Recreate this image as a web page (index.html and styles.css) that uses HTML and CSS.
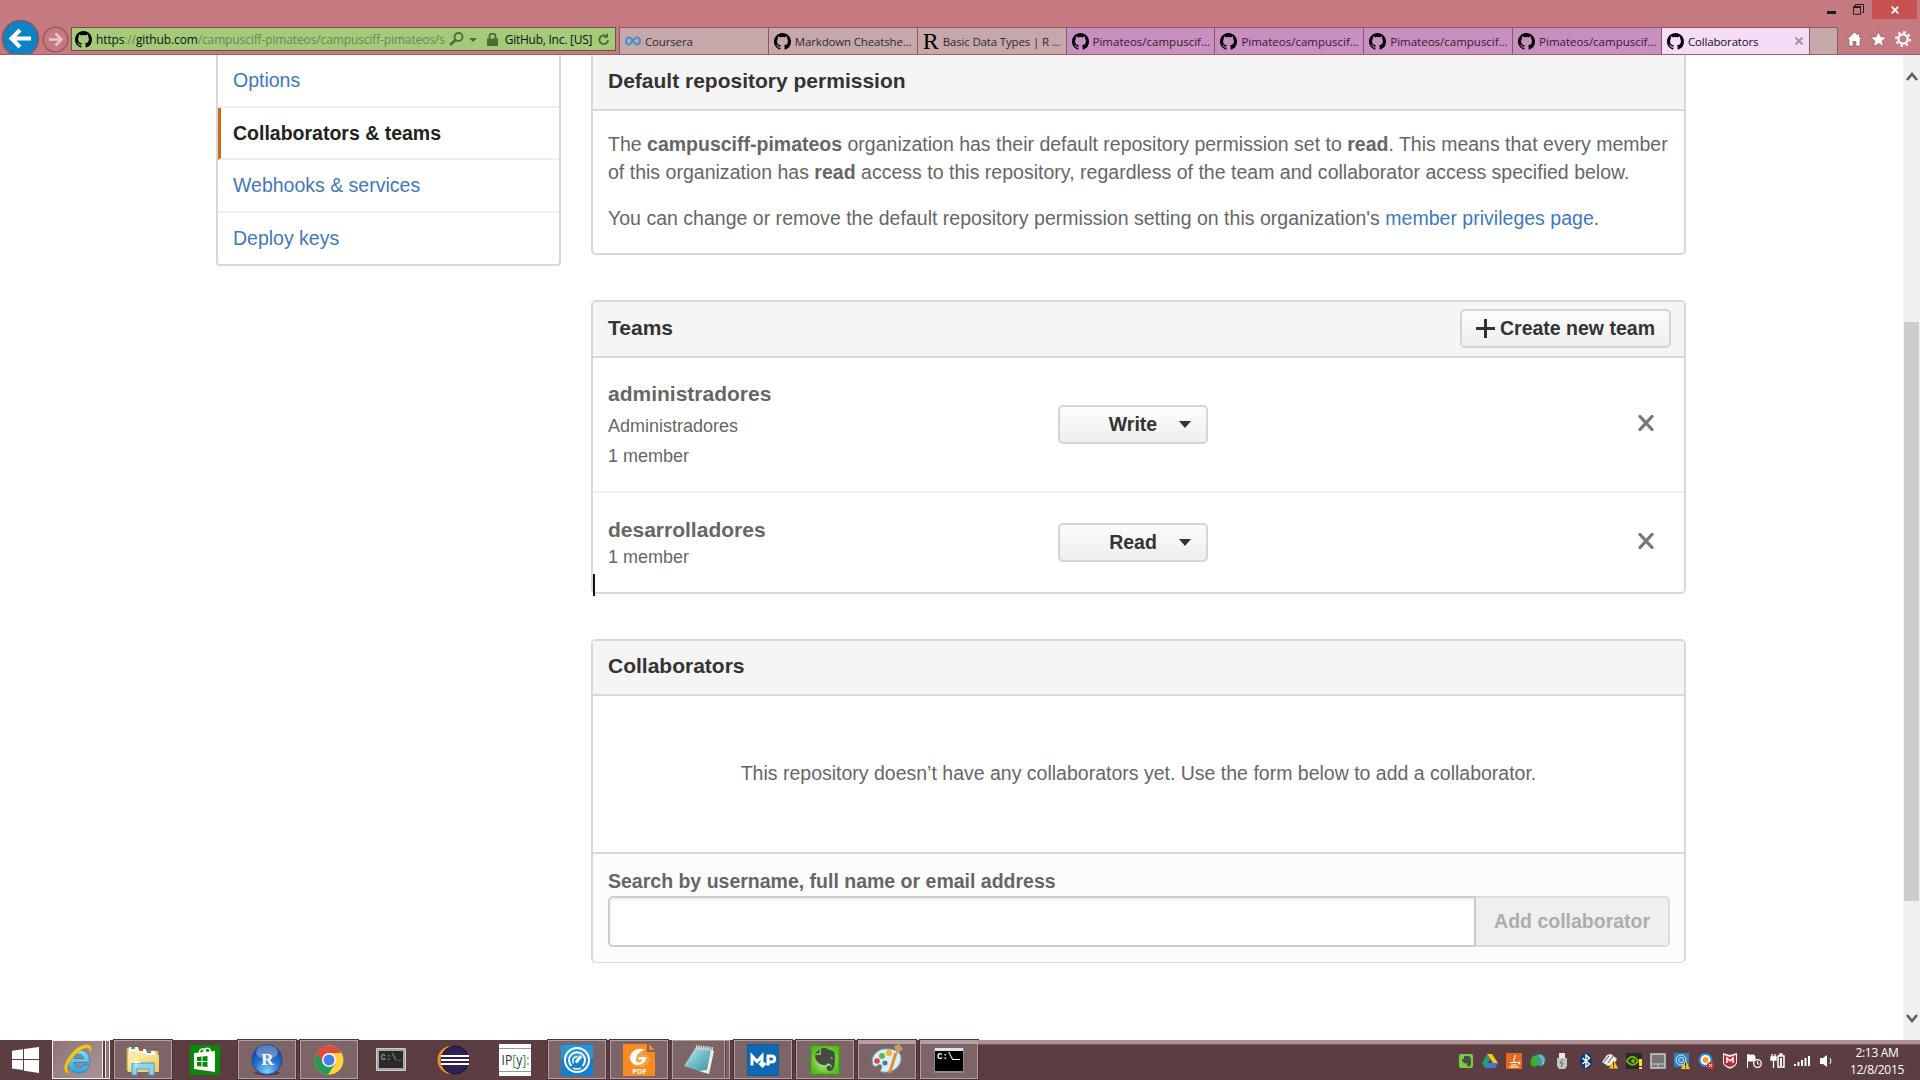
FILE: index.html
```html
<!DOCTYPE html>
<html lang="en">
<head>
<meta charset="utf-8">
<title>Collaborators</title>
<link rel="stylesheet" href="styles.css">
</head>
<body>
<svg class="defs" width="0" height="0">
  <defs>
    <linearGradient id="gold" x1="0" y1="0" x2="1" y2="1"><stop offset="0" stop-color="#fff3b0"/><stop offset="1" stop-color="#e9c860"/></linearGradient>
    <linearGradient id="sky" x1="0" y1="0" x2="0" y2="1"><stop offset="0" stop-color="#8edcf8"/><stop offset="1" stop-color="#2ba3dc"/></linearGradient>
    <radialGradient id="ball" cx=".5" cy=".9" r=".9"><stop offset="0" stop-color="#7fd0ff"/><stop offset=".5" stop-color="#2372cf"/><stop offset="1" stop-color="#123a97"/></radialGradient>
    <linearGradient id="paper" x1="0" y1="0" x2="1" y2="1"><stop offset="0" stop-color="#d7f1f5"/><stop offset=".5" stop-color="#6fb9c9"/><stop offset="1" stop-color="#3b8ba3"/></linearGradient>
    <radialGradient id="leaf"><stop offset="0" stop-color="#d9f7a8"/><stop offset="1" stop-color="#5dbb22"/></radialGradient>
  </defs>
  <symbol id="mark" viewBox="0 0 16 16"><path d="M8 0C3.58 0 0 3.58 0 8c0 3.54 2.29 6.53 5.47 7.59.4.07.55-.17.55-.38 0-.19-.01-.82-.01-1.49-2.01.37-2.53-.49-2.69-.94-.09-.23-.48-.94-.82-1.13-.28-.15-.68-.52-.01-.53.63-.01 1.08.58 1.23.82.72 1.21 1.87.87 2.33.66.07-.52.28-.87.51-1.07-1.78-.2-3.64-.89-3.64-3.95 0-.87.31-1.59.82-2.15-.08-.2-.36-1.02.08-2.12 0 0 .67-.21 2.2.82.64-.18 1.32-.27 2-.27s1.36.09 2 .27c1.53-1.04 2.2-.82 2.2-.82.44 1.1.16 1.92.08 2.12.51.56.82 1.27.82 2.15 0 3.07-1.87 3.75-3.65 3.95.29.25.54.73.54 1.48 0 1.07-.01 1.93-.01 2.2 0 .21.15.46.55.38A8.01 8.01 0 0 0 16 8c0-4.42-3.58-8-8-8z"/></symbol>
  <symbol id="cross" viewBox="0 0 16 16"><path d="M2 1.5l12 13M14 1.5l-12 13" stroke="currentColor" stroke-width="3.3" stroke-linecap="round"/></symbol>
  <symbol id="warn" viewBox="0 0 10 10"><path d="M5 0l5 10H0z" fill="#ffc21c"/><path d="M5 3v3.6M5 7.5v1.3" stroke="#222" stroke-width="1.2"/></symbol>
</svg>

<header class="browser">
  <div class="titlebar">
    <svg class="min" width="9" height="3"><rect width="9" height="3" fill="#1c1c1c"/></svg>
    <svg class="restore" width="11" height="11" fill="none" stroke="#2b1d1f"><path d="M2.5 2V.5h8v8H9"/><path d="M.5 3h7v7.3h-7z"/><path d="M0 3h8" stroke-width="2"/></svg>
    <span class="winclose"><svg width="8" height="8" viewBox="0 0 8 8"><path d="M.7.7l6.6 6.6M7.3.7L.7 7.3" stroke="#fff" stroke-width="1.8"/></svg></span>
  </div>
  <div class="navbar">
    <svg class="back" width="39" height="34" viewBox="0 0 39 34"><circle cx="19.5" cy="18.5" r="18" fill="#0a84c6" stroke="#8d545b" stroke-width="1.5"/><path d="M30 18.500H12M19 10l-8.500 8.500 8.500 8.500" fill="none" stroke="#fff" stroke-width="4"/></svg>
    <svg class="forward" width="27" height="27" viewBox="0 0 27 27" fill="none"><circle cx="13.500" cy="13.500" r="12.300" stroke="#96555c" stroke-width="1.300"/><path d="M7 13.500h12M13.500 7.500l6 6-6 6" stroke="#edc6ca" stroke-width="2.500"/></svg>
    <div class="address">
      <svg class="mark" width="17" height="17"><use href="#mark"/></svg>
      <span class="url">https<i>://</i>github.com<i>/campusciff-pimateos/campusciff-pimateos/s</i></span>
      <svg class="lens" width="15" height="14" viewBox="0 0 15 14" fill="none" stroke="#4f6b38" stroke-width="1.800"><circle cx="9.500" cy="5" r="4"/><path d="M6.500 8L1 13" stroke-width="2.500"/></svg>
      <svg class="drop" width="8" height="4"><path d="M0 0h8L4 4z" fill="#4f6b38"/></svg>
      <svg class="lock" width="11" height="13" viewBox="0 0 11 13"><path d="M0 5.500h11V13H0z" fill="#4f6b38"/><path d="M2.500 6V3.500a3 3 0 0 1 6 0V6" fill="none" stroke="#4f6b38" stroke-width="1.800"/></svg>
      <span class="issuer">GitHub, Inc. [US]</span>
      <svg class="reload" width="12" height="13" viewBox="0 0 12 13"><path d="M8.500 3.500A4.300 4.300 0 1 0 10 7" fill="none" stroke="#4f6b38" stroke-width="1.900"/><path d="M5.500 4.800H10V0z" fill="#4f6b38"/></svg>
    </div>
    <nav class="tabs">
      <div class="tab gray"><svg width="16" height="10" viewBox="0 0 16 10"><path d="M8 5C6 2 5 1.500 4 1.500a3 3.500 0 0 0 0 7C6 8.500 9 1.500 12 1.500a3 3.500 0 0 1 0 7C11 8.500 10 8 8 5z" fill="none" stroke="#4a90cf" stroke-width="2.200"/></svg><span>Coursera</span></div>
      <div class="tab gray"><svg width="17" height="17"><use href="#mark"/></svg><span>Markdown Cheatshe...</span></div>
      <div class="tab gray"><b class="rmark">R</b><span>Basic Data Types | R ...</span></div>
      <div class="tab pink"><svg width="17" height="17"><use href="#mark"/></svg><span>Pimateos/campuscif...</span></div>
      <div class="tab pink"><svg width="17" height="17"><use href="#mark"/></svg><span>Pimateos/campuscif...</span></div>
      <div class="tab pink"><svg width="17" height="17"><use href="#mark"/></svg><span>Pimateos/campuscif...</span></div>
      <div class="tab pink"><svg width="17" height="17"><use href="#mark"/></svg><span>Pimateos/campuscif...</span></div>
      <div class="tab active"><svg width="17" height="17"><use href="#mark"/></svg><span>Collaborators</span><svg class="tabclose" width="8" height="8" viewBox="0 0 8 8"><path d="M.5.5l7 7M7.500.5l-7 7" stroke="#a394a3" stroke-width="2"/></svg></div>
      <div class="newtab"></div>
    </nav>
    <div class="tools">
      <svg width="15" height="16" viewBox="0 0 15 16"><path d="M7.500 1L0 8.500h2V15h4v-4.500h3V15h4V8.500h2L12.500 6V2.500h-2V4z" fill="#fff" stroke="#7d4a50" stroke-width=".6"/></svg>
      <svg width="17" height="16" viewBox="0 0 17 16"><path d="M8.500.5l2.300 5.200 5.700.5-4.300 3.700 1.300 5.600-5-3-5 3 1.300-5.600L.5 6.200l5.700-.5z" fill="#fff" stroke="#7d4a50" stroke-width=".6"/></svg>
      <svg width="16" height="16" viewBox="0 0 16 16" fill="none" stroke="#fff"><circle cx="8" cy="8" r="4.600" stroke-width="2.200"/><circle cx="8" cy="8" r="6.800" stroke-width="2.200" stroke-dasharray="2.500 2.840"/></svg>
    </div>
  </div>
</header>

<div class="viewport">
  <main class="page">
    <nav class="menu">
      <a class="item first">Options</a>
      <a class="item selected">Collaborators &amp; teams</a>
      <a class="item">Webhooks &amp; services</a>
      <a class="item last">Deploy keys</a>
    </nav>
    <div class="column">
      <section class="box permission">
        <h3>Default repository permission</h3>
        <div class="prose">
          <p>The <strong>campusciff-pimateos</strong> organization has their default repository permission set to <strong>read</strong>. This means that every member<br><span class="wide">of this organization has <strong>read</strong> access to this repository, regardless of the team and collaborator access specified below.</span></p>
          <p class="wide">You can change or remove the default repository permission setting on this organization's <a>member privileges page</a>.</p>
        </div>
      </section>
      <section class="box teams">
        <h3>Teams <button class="btn create"><svg width="19" height="19" viewBox="0 0 19 19"><path d="M9.500 0v19M0 9.500h19" stroke="#333" stroke-width="3"/></svg>Create new team</button></h3>
        <div class="team admin">
          <div><h4>administradores</h4><p>Administradores</p><p>1 member</p></div>
          <button class="btn select">Write<i class="caret"></i></button>
          <svg class="remove" width="16" height="16"><use href="#cross"/></svg>
        </div>
        <div class="team dev">
          <div><h4>desarrolladores</h4><p>1 member</p></div>
          <button class="btn select">Read<i class="caret"></i></button>
          <svg class="remove" width="16" height="16"><use href="#cross"/></svg>
        </div>
        <span class="textcursor"></span>
      </section>
      <section class="box collab">
        <h3>Collaborators</h3>
        <div class="blank">This repository doesn’t have any collaborators yet. Use the form below to add a collaborator.</div>
        <div class="form">
          <label>Search by username, full name or email address</label>
          <div class="group"><input type="text"><button class="btn add">Add collaborator</button></div>
        </div>
      </section>
    </div>
  </main>
  <aside class="scrollbar">
    <svg width="12" height="10" viewBox="0 0 12 10"><path d="M1 8l5-6 5 6" fill="none" stroke="#5c5c5c" stroke-width="2.600"/></svg>
    <div class="thumb"></div>
    <svg class="down" width="12" height="10" viewBox="0 0 12 10"><path d="M1 2l5 6 5-6" fill="none" stroke="#5c5c5c" stroke-width="2.600"/></svg>
  </aside>
</div>

<footer class="taskbar">
  <div class="start"><svg width="27" height="26" viewBox="0 0 27 26"><path d="M0 3.800L11 2.200V12H0zM12 2L27 0v12H12zM0 13h11v10L0 21.500zM12 13h15v13l-15-2.200z" fill="#fff"/></svg></div>
  <div class="apps">
    <div class="app open front stack"><svg width="32" height="32" viewBox="0 0 32 32"><path d="M27.500 18.500H12c.5 6 7.500 6.500 9.500 2.500h6C24 33 5 31 6 17 7 2 29 2 27.500 18.500zM12 14.500h9.500c-.5-6-9-6-9.500 0z" fill="url(#sky)" stroke="#1c86c4" stroke-width=".8"/><path d="M5.500 29.500C-5 25 14-3 27 1c3 1 3 4 1.500 8-.3-4-1.500-5.500-4.500-5C14 6 0 25 7 28z" fill="#f6c61c" stroke="#d99a10" stroke-width=".6"/></svg></div>
    <div class="app open"><svg width="34" height="32" viewBox="0 0 34 32"><path d="M1 4h11l2 3h18v20H1z" fill="#f6dc87" stroke="#b99a42"/><path d="M3 3h9v5H3zM11 5h9v5h-9zM20 7h9v5h-9z" fill="#fff"/><path d="M5 3h4v2H5z" fill="#2b4"/><path d="M13 5h4v2h-4z" fill="#d42"/><path d="M21 7h4v2h-4z" fill="#28d"/><path d="M2 9h14l2 2h15v17H2z" fill="url(#gold)"/><path d="M6 19h22v12h-5v-6H11v6H6z" fill="#8fd3ee" stroke="#4a9cc4"/><path d="M10 14v9M5.500 18.500h9" stroke="#fff"/></svg></div>
    <div class="app"><svg width="30" height="30" viewBox="0 0 30 30"><path d="M0 0h30v30H0z" fill="#078a07"/><path d="M4 8l21-2v21L4 24z" fill="#fff"/><path d="M9 10c0-8 7-8 7-1M13 8c2-7 9-6 7 1" fill="none" stroke="#fff" stroke-width="1.500"/><path d="M7 12l4.500-.5V16H7zM12.500 11.500l5-.5v5h-5zM7 17h4.500v4.500L7 21zM12.500 17h5v5l-5-.5z" fill="#078a07"/></svg></div>
    <div class="app open"><svg width="32" height="32" viewBox="0 0 32 32"><ellipse cx="16" cy="29" rx="13" ry="2.500" fill="#3d2c44" opacity=".6"/><circle cx="16" cy="15.500" r="15" fill="url(#ball)" stroke="#1e4a94"/><ellipse cx="16" cy="8" rx="11" ry="7" fill="#fff" opacity=".3"/><text x="16.500" y="21" text-anchor="middle" class="glyph-r">R</text></svg></div>
    <div class="app open"><svg width="30" height="30" viewBox="0 0 30 30"><circle cx="15" cy="15" r="14.500" fill="#ffd23e"/><path d="M15 15L2.400 7.800A14.500 14.500 0 0 0 14 29.500l7.300-11z" fill="#1f9d55"/><path d="M15 8h12.600A14.500 14.500 0 0 0 2.400 7.800L9 18.500z" fill="#dd4b3e"/><circle cx="15" cy="15" r="7" fill="#fff"/><circle cx="15" cy="15" r="5.500" fill="#3f82ee"/></svg></div>
    <div class="app"><svg width="30" height="24" viewBox="0 0 30 24"><path d="M.5.5h29v22H.5z" fill="#aaa6a6" stroke="#d0cccc"/><path d="M3 3h24v17H3z" fill="#292929"/><text x="4.500" y="11.500" class="glyph-cmd dim">C:\_</text></svg></div>
    <div class="app"><svg width="33" height="30" viewBox="0 0 33 30"><circle cx="14.500" cy="15" r="14" fill="#ee8e24"/><circle cx="18" cy="15" r="14" fill="#2c2255" stroke="#1b1435"/><path d="M4 11h28M4 15h28M4 19h28" stroke="#fff" stroke-width="2"/></svg></div>
    <div class="app"><svg width="32" height="32" viewBox="0 0 32 32"><path d="M0 0h32v32H0z" fill="#fff"/><path d="M0 4.500h32M0 27.500h32" stroke="#999"/><text x="2.500" y="21" textLength="28" lengthAdjust="spacingAndGlyphs" class="glyph-py">IP<tspan fill="#2f9c3c">[</tspan>y<tspan fill="#2f9c3c">]:</tspan></text></svg></div>
    <div class="app open"><svg width="32" height="32" viewBox="0 0 32 32" fill="none"><rect width="32" height="32" rx="2" fill="#1480c9"/><path d="M0 1h32v14H0z" fill="#39a4e0" opacity=".6"/><circle cx="16" cy="16" r="12" stroke="#fff" stroke-width="2"/><path d="M10.500 22a8 8 0 1 1 11 0" stroke="#fff" stroke-width="2"/><path d="M12.500 19.500a4.500 4.500 0 0 1 4-7" stroke="#fff" stroke-width="1.500"/><path d="M15 18.500l5-6.500" stroke="#fff" stroke-width="3"/><path d="M12 24q4 2 8 0" stroke="#fff" stroke-width="1.500"/></svg></div>
    <div class="app open"><svg width="32" height="32" viewBox="0 0 32 32"><path d="M0 0h24v8h8v24H0z" fill="#f68b1f"/><path d="M26 0l6 6h-6z" fill="#f68b1f"/><path d="M10 7L16 4l12 11-7 8-10-1-6-9z" fill="#fff" opacity=".2"/><path d="M22.500 5.500C11 2 4 12 8.500 18c4 5.500 14 3 15-5h-8v2.500h4c-1.500 4.500-7.500 3.500-6.500-1 1-4.500 4-7.500 9.500-9z" fill="#fff"/><text x="16.500" y="30" text-anchor="middle" class="glyph-pdf">PDF</text></svg></div>
    <div class="app open stack two"><svg width="32" height="30" viewBox="0 0 32 30"><path d="M13 2l17 2-5 25L1 21z" fill="url(#paper)"/><path d="M28 5l3 1-5 23-10-3 8-1z" fill="#f2eee0"/><path d="M13 2l17 2" stroke="#d3d9da" stroke-width="4" stroke-dasharray="1.500 .8"/></svg></div>
    <div class="app open"><svg width="32" height="32" viewBox="0 0 32 32"><path d="M0 0h32v32H0z" fill="#0f69b0" stroke="#0a579a"/><path d="M5 21.500V12l5 5.500 5-5.500v9.500M12.500 19l3 3 3-3M21 21.500V12h3c5 0 5 6 0 6h-3" fill="none" stroke="#fff" stroke-width="3"/></svg></div>
    <div class="app open"><svg width="30" height="30" viewBox="0 0 30 30"><rect x=".5" y=".5" width="29" height="29" rx="2" fill="url(#leaf)" stroke="#389b17" stroke-width="1.500"/><path d="M11 3.500c5-1 7 0 8 1.500 5 0 6 2 6 8 0 8-1 12-4.500 13-5 0-5-5.500-1-5.500 1.500.5 1.500 1.500 1 2.500 2.500-.5 1-5-3-4.500-1.500 3.500-7 1-9-.5C6 16 5 13 5 10h5.500c.5-1 .5-4 .5-6.500z" fill="#464b46"/><path d="M9.500 4v4.500H5z" fill="#464b46"/><path d="M20 13q2-2 3 1z" fill="#b4ea74"/></svg></div>
    <div class="app open lit"><svg width="34" height="32" viewBox="0 0 34 32"><path d="M17 5C5 4-1 16 4 22c2 2 5-3 7-1 3 2-3 6 1 7 12 2 20-7 19-15C30 7 24 5 17 5z" fill="#d8eef8" stroke="#62a6cb"/><circle cx="12" cy="12" r="3" fill="#5cba43"/><circle cx="19" cy="9" r="3" fill="#f6b322"/><circle cx="7" cy="17" r="2.800" fill="#dc4438"/><circle cx="15" cy="19" r="2.500" fill="#54738a"/><path d="M26 9l-6.500 20" stroke="#e88b2b" stroke-width="3"/><path d="M24 2l5-2 4 5-6 5z" fill="#c49a64"/></svg></div>
    <div class="app open lit"><svg width="30" height="26" viewBox="0 0 30 26"><path d="M0 1h30v25H0z" fill="#8b8b8b"/><path d="M1 1h28v3H1z" fill="#dde3e8"/><path d="M1 4h28v20H1z" fill="#000"/><text x="3" y="12" class="glyph-cmd">C:\</text><path d="M18 12.500h8" stroke="#fff"/></svg></div>
  </div>
  <div class="rest">
    <div class="tray">
      <svg viewBox="0 0 16 16"><rect x="1" y="1" width="14" height="14" rx="2" fill="#7ac943"/><path d="M6 3h4c2.500 0 3 2 3 5 0 4-.5 5.500-2.500 5.500s-2-3 0-3c-3 .5-6.500-.5-6.500-4.500h2z" fill="#435043"/></svg>
      <svg viewBox="0 0 16 16"><path d="M5 1h5l6 9h-5z" fill="#f7c525"/><path d="M5 1L0 10l3 5 5-9z" fill="#1fa463"/><path d="M5 10h11l-3 5H3z" fill="#3b7ce0"/></svg>
      <svg viewBox="0 0 16 16"><rect width="16" height="16" fill="#e8671b"/><path d="M9 2c2 2-4 4 0 7M4 9.500h8M5 12h6M3 14h10M12 9c3 0 2 2 0 2" stroke="#fff" fill="none" stroke-width="1.100"/></svg>
      <svg viewBox="0 0 16 16"><circle cx="9.500" cy="7" r="6" fill="#3a9aa8"/><path d="M5 2C1 4-1 10 2 13c5 3 8-3 6-9L5.500 9z" fill="#35b51c"/><path d="M10 3c4 2 4 7 2 9" stroke="#b9f0d4" stroke-width="2" stroke-dasharray="1 1" fill="none"/></svg>
      <svg viewBox="0 0 16 16"><path d="M5 0h6v5H5z" fill="#e8e8e8"/><path d="M3 5h10v8l-2 3H5l-2-3z" fill="#c4c4c4"/><path d="M9 6l-3 4h3l-2 4" fill="none" stroke="#666"/></svg>
      <svg viewBox="0 0 16 16"><ellipse cx="8" cy="8" rx="6" ry="8" fill="#0b3a7a"/><path d="M4.500 5l7 6L8 14V2l3.500 3-7 6" fill="none" stroke="#fff" stroke-width="1.400"/></svg>
      <svg viewBox="0 0 16 16"><path d="M0 9l5-7 4-1 6 5-3 5-6 2z" fill="#ececec"/><path d="M2 9l5-6M6 10l5-7" stroke="#555"/><use href="#warn" x="7" y="6" width="9" height="10"/></svg>
      <svg viewBox="0 0 16 16"><path d="M0 0h16v16H0z" fill="#262b2b"/><path d="M1 8c3-6 8-5 11 0-3 5-8 5-11 0z" fill="none" stroke="#76b900" stroke-width="1.700"/><circle cx="7" cy="8" r="2" fill="#76b900"/><path d="M13 6h3v7h-3zM13 14h3v2h-3z" fill="#ffe02b"/></svg>
      <svg viewBox="0 0 16 16"><path d="M1 1h14v14H1z" fill="#777" stroke="#ccc" stroke-width="1.500"/><path d="M1 11h14M8 11v4" stroke="#ccc"/></svg>
      <svg viewBox="0 0 16 16"><path d="M0 0h15v14H0z" fill="#2b82c4"/><g fill="none" stroke="#cbe9ff"><circle cx="7" cy="7" r="5"/><circle cx="7" cy="7" r="2.500"/></g><use href="#warn" x="7" y="7" width="9" height="9"/></svg>
      <svg viewBox="0 0 16 16"><circle cx="7.500" cy="7" r="7" fill="#2589dc"/><circle cx="7.500" cy="7" r="5" fill="#fff"/><circle cx="7.500" cy="7" r="3" fill="#ff9d1c"/><circle cx="12.500" cy="12.500" r="3.500" fill="#d8342d"/><path d="M11 11l3 3M14 11l-3 3" stroke="#fff"/></svg>
      <svg viewBox="0 0 16 16"><path d="M1 0l7 2 7-2v9c0 4-4 5-7 7-3-2-7-3-7-7z" fill="#eee"/><path d="M2 2l6 2 6-2v7c0 3-3 4-6 5-3-1-6-2-6-5z" fill="#b72734"/><path d="M5 10V5l3 3 3-3v5" stroke="#fff" fill="none" stroke-width="1.500"/></svg>
      <svg viewBox="0 0 16 16"><path d="M1.500 1v14M2 2h6l1 2v4H2z" fill="#fff" stroke="#fff"/><circle cx="11.500" cy="10.500" r="3.800" fill="#583b3d" stroke="#fff" stroke-width="1.300"/><path d="M11.500 8v3h2" stroke="#fff" fill="none"/></svg>
      <svg viewBox="0 0 16 16"><path d="M8 3h6v11H8zM10 1h2v2h-2z" fill="none" stroke="#fff" stroke-width="1.500"/><path d="M10 5h2v8h-2z" fill="#fff"/><path d="M2 1v3M5 1v3M1 4h5v3H1zM3.500 7v8" stroke="#fff" fill="#fff" stroke-width="1.300"/></svg>
      <svg viewBox="0 0 16 16"><path d="M1 13v-2M4.500 13V9M8 13V7M11.500 13V5M15 13V3" stroke="#fff" stroke-width="2"/></svg>
      <svg viewBox="0 0 16 16"><path d="M2 5h3l4-3v12l-4-3H2z" fill="#fff"/><path d="M12 5q2 3 0 6" fill="none" stroke="#fff"/></svg>
    </div>
    <div class="clock"><span>2:13 AM</span><span>12/8/2015</span></div>
  </div>
</footer>
</body>
</html>
```
FILE: styles.css
```css
* { box-sizing: border-box; }
body {
  margin: 0;
  width: 1920px;
  height: 1080px;
  overflow: hidden;
  display: flex;
  flex-direction: column;
  background: #fff;
  font-family: "Liberation Sans", Arial, sans-serif;
  font-size: 19.5px;
  color: #666;
}
svg { display: block; flex: none; }
.defs { position: absolute; }
h3, h4, p { margin: 0; }

/* browser chrome */
.browser {
  height: 55px;
  flex: none;
  background: #c47a80;
  border-bottom: 1px solid #a55c64;
  font-family: "Open Sans", "Noto Sans", sans-serif;
  font-size: 12px;
  color: #111;
}
.titlebar { height: 20px; display: flex; justify-content: flex-end; padding-right: 3px; }
.min { margin: 11px 17px 0 0; }
.restore { margin: 4px 8px 0 0; }
.winclose { width: 45px; height: 19px; background: #c75050; display: grid; place-items: center; }
.navbar { height: 34px; display: flex; align-items: flex-start; }
.back { margin-left: 1px; }
.forward { margin: 6px 3px 0 2px; }
.address {
  width: 545px;
  height: 24px;
  margin: 7px 3px 0 -1px;
  padding: 0 5px 0 3px;
  display: flex;
  align-items: center;
  background: #a3cb79;
  border: 1px solid #73504a;
  white-space: nowrap;
}
.url { width: 350px; margin-left: 4px; letter-spacing: -.13px; }
.url i { font-style: normal; color: #6f855b; }
.lens { margin-left: 4px; }
.drop { margin: 2px 0 0 5px; }
.lock { margin: 0 0 0 10px; }
.issuer { width: 89px; margin-left: 7px; letter-spacing: -.25px; }
.reload { margin-left: 6px; }
.tabs {
  width: 1219px;
  height: 27px;
  margin-top: 7px;
  display: grid;
  grid-template-columns: repeat(7, 148.850px) 148px 28px;
  border: solid #90565e;
  border-width: 1px 1px 0 0;
}
.tab {
  display: flex;
  align-items: center;
  gap: 4px;
  padding-left: 5px;
  border-left: 1px solid #90565e;
  white-space: nowrap;
  font-size: 11.500px;
  letter-spacing: -.16px;
}
.gray, .newtab { background: #c6a8aa; color: #33282b; }
.pink { background: #c88fc1; color: #34202f; letter-spacing: 0; }
.active { background: #f5ddf7; }
.newtab { border-left: 1px solid #90565e; }
.tabclose { margin: 0 6px 0 auto; }
.rmark { width: 16px; font: 24px/26px "Liberation Serif", serif; color: #000; letter-spacing: 0; }
.tools { display: flex; gap: 8px; margin: 11px 0 0 9px; }

/* page */
.viewport { height: 985px; display: flex; overflow: hidden; }
.page { width: 1903px; padding-left: 216px; display: flex; gap: 30px; align-items: flex-start; }
.menu { width: 345px; border: solid #d8d8d8; border-width: 0 2px 2px; border-radius: 0 0 4px 4px; }
.item {
  display: flex;
  align-items: center;
  height: 52px;
  padding: 0 0 0 15px;
  border-bottom: 2px solid #eee;
  color: #4078c0;
}
.item.first { height: 53px; padding-bottom: 1px; }
.item.selected { height: 52px; border-left: 3px solid #d26911; padding: 0 0 0 12px; color: #222; font-weight: 700; }
.item:nth-child(3) { height: 53px; padding-bottom: 1px; }
.item.last { height: 51px; border-bottom: 0; padding-bottom: 1px; }
.column { width: 1095px; display: flex; flex-direction: column; }
.box { border: 2px solid #d8d8d8; border-radius: 5px; }
.box h3 {
  height: 55px;
  padding: 0 13px 4px 15px;
  display: flex;
  align-items: center;
  justify-content: space-between;
  background: #f5f5f5;
  border-bottom: 2px solid #d8d8d8;
  font-size: 21px;
  color: #333;
}
.permission { height: 200px; border-top: 0; border-radius: 0 0 5px 5px; }
.box.permission h3 { height: 56px; padding-bottom: 3px; }
.prose { padding: 19px 0 0 15px; line-height: 28px; white-space: nowrap; }
.prose p + p { margin-top: 18px; }
.prose a { color: #4078c0; }
.wide { letter-spacing: .016px; }
.teams { height: 294px; margin-top: 45px; position: relative; }
.box.teams h3 { height: 56px; padding-bottom: 2px; }
.btn {
  display: flex;
  align-items: center;
  justify-content: center;
  height: 39px;
  padding: 0 0 1px;
  border: 2px solid #d5d5d5;
  border-radius: 5px;
  background: linear-gradient(#fcfcfc, #eee);
  font: 700 19.5px "Liberation Sans", Arial, sans-serif;
  color: #333;
}
.create { width: 211px; gap: 5px; padding-bottom: 0; }
.team { display: grid; grid-template-columns: 450px 150px 1fr; align-items: center; padding-left: 15px; }
.team > div { align-self: start; }
.admin { height: 135px; border-bottom: 2px solid #eee; }
.dev { height: 99px; }
.team h4 { font-size: 21px; line-height: 28px; }
.team p { font-size: 18px; }
.admin > div { padding-top: 22px; }
.admin p { line-height: 30px; }
.admin h4 { margin-bottom: 3px; }
.dev > div { padding-top: 23px; }
.dev p { line-height: 26px; }
.select { padding-right: 12px; padding-left: 12px; position: relative; }
.caret { position: absolute; right: 15px; top: 14px; border: 6px solid transparent; border-top: 7px solid #333; border-bottom: 0; }
.remove { justify-self: end; margin: 0 30px 4px 0; color: #777; }
.textcursor { position: absolute; left: 0; bottom: -4px; width: 2px; height: 22px; background: #111; }
.collab { height: 324px; margin-top: 45px; border-bottom-width: 1px; }
.blank { height: 158px; display: grid; place-items: center; padding-bottom: 1px; border-bottom: 2px solid #d8d8d8; }
.form { height: 108px; padding: 13px 14px 0 15px; background: #fcfcfc; border-radius: 0 0 4px 4px; }
.form label { display: block; height: 29px; line-height: 28px; font-weight: 700; }
.group { display: flex; }
.group input {
  width: 869px;
  height: 51px;
  border: 2px solid #ccc;
  border-radius: 5px 0 0 5px;
  box-shadow: inset 0 2px 3px rgba(0, 0, 0, .07);
  background: #fff;
}
.add { width: 194px; height: 51px; border-left: 0; border-radius: 0 5px 5px 0; border-color: #dcdcdc; background: #efefef; color: #adadad; }
.scrollbar { width: 17px; background: #f0f0f0; display: flex; flex-direction: column; align-items: center; padding-top: 17px; }
.thumb { width: 15px; height: 579px; margin-top: 240px; background: #cdcdcd; }
.down { margin-top: 112px; }

/* taskbar */
.taskbar { height: 40px; display: flex; background: #5c3d41; }
.start { width: 52px; padding: 7px 0 0 12px; }
.apps { display: grid; grid-template-columns: repeat(15, 58px); gap: 4px; padding-bottom: 1px; }
.app { display: grid; place-items: center; }
.open { background: #7d6467; border: 1px solid #b29fa1; box-shadow: 0 0 0 1px #4c3235; }
.front { background: linear-gradient(135deg, #8d7679, #a99799); border-color: #f5eeee; }
.lit { background: linear-gradient(#b99fa2 3px, #7d6467 3px); }
.stack { padding-right: 7px; box-shadow: inset -3px 0 #8d7679, inset -4px 0 #f0e8e8, inset -6px 0 #5b3c3f, inset -7px 0 #f0e8e8; }
.two { padding-right: 4px; box-shadow: inset -3px 0 #7d6467, inset -4px 0 #5b3c3f, inset -5px 0 #b29fa1; }
.rest { flex: 1; display: flex; border-top: 4px solid #b08f92; box-shadow: inset 0 1px #76595c; }
.tray { display: flex; gap: 8px; margin: 9px 0 0 480px; }
.tray svg { width: 16px; height: 16px; }
.clock {
  width: 86px;
  margin-left: auto;
  display: flex;
  flex-direction: column;
  align-items: center;
  font: 12px/17px "Open Sans", "Noto Sans", sans-serif;
  letter-spacing: -.3px;
  color: #fff;
}
.glyph-r { font: 700 17px "Liberation Serif", serif; fill: #fff; }
.glyph-cmd { font: 700 9px "Liberation Mono", monospace; fill: #fff; }
.glyph-cmd.dim { fill: #8b8b8b; }
.glyph-py { font: 15px "Open Sans", sans-serif; fill: #333; }
.glyph-pdf { font: 700 7.500px "Open Sans", sans-serif; fill: #fff; }
```
